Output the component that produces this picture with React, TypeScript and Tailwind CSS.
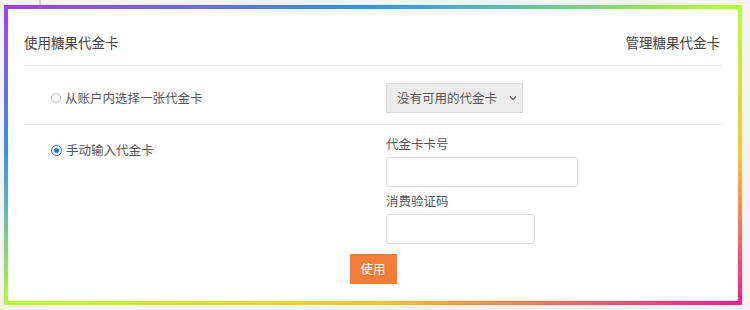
import React from "react";

const Radio = ({ checked }: { checked?: boolean }) =>
  checked ? (
    <span className="flex h-[11px] w-[11px] shrink-0 items-center justify-center rounded-full border-[1.5px] border-[#1a73e8] bg-white">
      <span className="h-[5px] w-[5px] rounded-full bg-[#1a73e8]" />
    </span>
  ) : (
    <span className="h-[10px] w-[10px] shrink-0 rounded-full border border-[#b5b5b5] bg-white" />
  );

const App = () => {
  return (
    <div className="h-[310px] w-[750px] bg-[#f4f4f4] font-['Noto_Sans_CJK_SC','Microsoft_YaHei',sans-serif]">
      <div className="h-[5px] pl-[39px]">
        <div className="h-full w-[2px] bg-[#cad6df]" />
      </div>

      <div className="ml-[4px] h-[300px] w-[738px] bg-[linear-gradient(to_bottom_right,#a83bff_0%,#2f95f5_25%,#b2ff2e_50%,#ffc42e_75%,#ff1493_100%)] p-[4px]">
        <div className="h-full bg-white px-[16px]">
          {/* header */}
          <div className="flex items-center justify-between border-b border-[#eeeeee] pb-[13px] pt-[23px] text-[13.5px] leading-[20px] text-[#444]">
            <span>使用糖果代金卡</span>
            <span className="pr-[2px]">管理糖果代金卡</span>
          </div>

          {/* choose from account */}
          <div className="flex border-b border-[#eeeeee] pb-[11px] pt-[17px] text-[12.5px] text-[#555]">
            <label className="flex w-[362px] items-center gap-[4px] pl-[27px] leading-[20px]">
              <Radio />
              从账户内选择一张代金卡
            </label>
            <div className="flex h-[30px] w-[137px] items-center justify-between border border-[#dcdcdc] bg-[#ececec] pl-[10px] pr-[5px] leading-[20px] text-[#555]">
              <span>没有可用的代金卡</span>
              <svg width="8" height="6" viewBox="0 0 8 6" fill="none">
                <path d="M1 1.5L4 4.5L7 1.5" stroke="#555" strokeWidth="1.2" />
              </svg>
            </div>
          </div>

          {/* manual input */}
          <div className="flex text-[12.5px] text-[#555]">
            <label className="flex h-fit w-[362px] items-center gap-[4px] pl-[27px] pt-[15px] leading-[20px]">
              <Radio checked />
              手动输入代金卡
            </label>
            <div className="flex flex-col pt-[9px] leading-[20px]">
              <span>代金卡卡号</span>
              <input className="mt-[3px] h-[30px] w-[192px] rounded-[3px] border border-[#dddddd] outline-none" />
              <span className="mt-[4px]">消费验证码</span>
              <input className="mt-[3px] h-[30px] w-[149px] rounded-[3px] border border-[#dddddd] outline-none" />
            </div>
          </div>

          <div className="mt-[10px] flex justify-center">
            <button className="h-[30px] w-[47px] bg-[#f07d3a] text-[12.5px] text-white">
              使用
            </button>
          </div>
        </div>
      </div>
    </div>
  );
};

export default App;
